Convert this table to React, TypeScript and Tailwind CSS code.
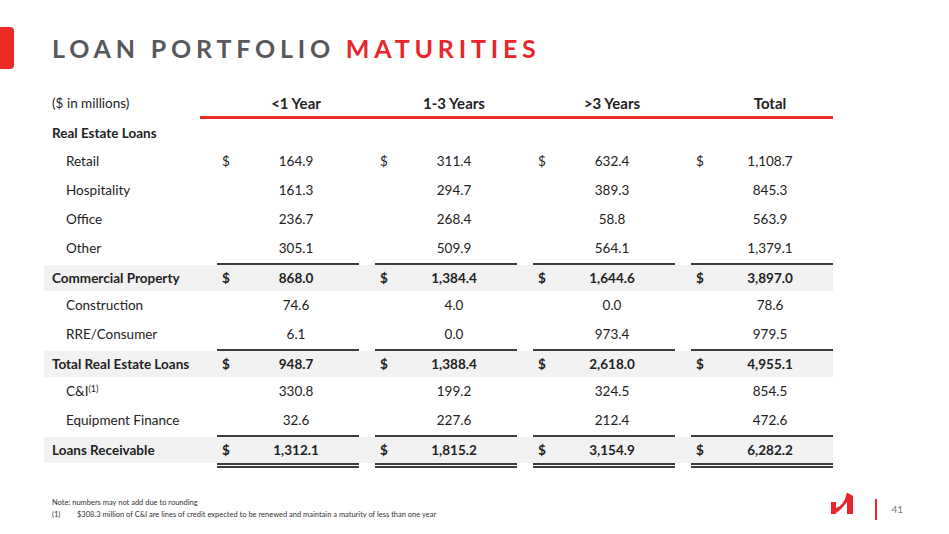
import type { ReactNode } from 'react'

type Row = {
  label: string
  kind: 'section' | 'item' | 'total' | 'grand'
  vals?: string[]
  dollar?: boolean
  sup?: string
}

const ROWS: Row[] = [
  { label: 'Real Estate Loans', kind: 'section' },
  { label: 'Retail', kind: 'item', vals: ['164.9', '311.4', '632.4', '1,108.7'], dollar: true },
  { label: 'Hospitality', kind: 'item', vals: ['161.3', '294.7', '389.3', '845.3'] },
  { label: 'Office', kind: 'item', vals: ['236.7', '268.4', '58.8', '563.9'] },
  { label: 'Other', kind: 'item', vals: ['305.1', '509.9', '564.1', '1,379.1'] },
  { label: 'Commercial Property', kind: 'total', vals: ['868.0', '1,384.4', '1,644.6', '3,897.0'] },
  { label: 'Construction', kind: 'item', vals: ['74.6', '4.0', '0.0', '78.6'] },
  { label: 'RRE/Consumer', kind: 'item', vals: ['6.1', '0.0', '973.4', '979.5'] },
  { label: 'Total Real Estate Loans', kind: 'total', vals: ['948.7', '1,388.4', '2,618.0', '4,955.1'] },
  { label: 'C&I', kind: 'item', sup: '(1)', vals: ['330.8', '199.2', '324.5', '854.5'] },
  { label: 'Equipment Finance', kind: 'item', vals: ['32.6', '227.6', '212.4', '472.6'] },
  { label: 'Loans Receivable', kind: 'grand', vals: ['1,312.1', '1,815.2', '3,154.9', '6,282.2'] },
]

const HEADERS = ['<1 Year', '1-3 Years', '>3 Years', 'Total']

// label column + four money columns, 16px apart
const GRID = 'grid grid-cols-[157px_142px_142px_142px_142px] gap-x-4'

function Cell({ value, dollar, bold }: { value: string; dollar?: boolean; bold?: boolean }) {
  return (
    <div className={`flex items-center ${bold ? 'font-bold' : ''}`}>
      <span className="w-[16px] pl-[5px]">{dollar ? '$' : ''}</span>
      <span className="flex-1 text-center">{value}</span>
    </div>
  )
}

function Rule({ kind }: { kind: 'single' | 'double' }) {
  const cls = kind === 'single' ? 'h-[2px] bg-[#3c3c3c]' : 'h-[5px] border-y-2 border-[#3c3c3c]'
  return (
    <div className={GRID}>
      <div />
      {HEADERS.map((h) => (
        <div key={h} className={cls} />
      ))}
    </div>
  )
}

function TableRow({ row }: { row: Row }) {
  if (row.kind === 'section') {
    return <div className="flex h-[28px] items-center pl-2 font-bold">{row.label}</div>
  }
  const strong = row.kind !== 'item'
  const body: ReactNode = (
    <div className={`${GRID} ${strong ? 'h-[26px] bg-[#f2f2f2]' : 'h-[29px]'} items-center`}>
      <div className={strong ? 'pl-2 font-bold' : 'pl-[22px]'}>
        {row.label}
        {row.sup && <sup className="text-[9px]">{row.sup}</sup>}
      </div>
      {row.vals!.map((v, i) => (
        <Cell key={i} value={v} dollar={strong || row.dollar} bold={strong} />
      ))}
    </div>
  )
  return (
    <>
      {strong && <Rule kind="single" />}
      {body}
      {row.kind === 'grand' && <Rule kind="double" />}
    </>
  )
}

function Logo() {
  return (
    <svg width="25" height="24" viewBox="0 0 25 24" className="fill-[#e8262b]">
      <rect x="1" y="11" width="5" height="12" />
      <path d="M17 1.5 L23 5 L23 23 L17 23 Z" />
      <path d="M6 17 Q14 15 17 1.5 L17 11 Q12 18 6 22 Z" />
    </svg>
  )
}

export default function App() {
  return (
    <div className="relative h-[534px] w-[949px] overflow-hidden bg-white text-[#222] [font-family:Lato,'Liberation_Sans',sans-serif]">
      <div className="mt-[27px] flex h-[42px] items-center">
        <div className="h-[42px] w-[14px] rounded-r-[4px] bg-[#ee2a24]" />
        <h1 className="ml-[38px] text-[25px] font-bold leading-none tracking-[4.8px] text-[#58585a]">
          LOAN PORTFOLIO <span className="text-[#e8262b]">MATURITIES</span>
        </h1>
      </div>

      <div className="ml-[44px] mt-[22px] w-[789px] text-[13.5px]">
        <div className={`${GRID} h-[25px] items-center`}>
          <div className="pl-2">($ in millions)</div>
          {HEADERS.map((h) => (
            <div key={h} className="flex">
              <span className="w-[16px]" />
              <span className="flex-1 text-center text-[15px] font-bold">{h}</span>
            </div>
          ))}
        </div>
        <div className="ml-[156px] h-[3px] bg-[#ee2a24]" />
        {ROWS.map((r) => (
          <TableRow key={r.label} row={r} />
        ))}
      </div>

      <div className="mt-[23px] flex items-start">
        <div className="ml-[52px] mt-[6px] flex-1 text-[7.5px] leading-[12px] text-[#333]">
          <div>Note: numbers may not add due to rounding</div>
          <div className="flex">
            <span className="w-[25px]">(1)</span>
            <span>$308.3 million of C&amp;I are lines of credit expected to be renewed and maintain a maturity of less than one year</span>
          </div>
        </div>
        <div className="mr-[46px] flex items-start">
          <Logo />
          <div className="ml-[20px] mt-[8px] h-[21px] w-[2px] bg-[#e8262b]" />
          <div className="ml-[14px] mt-[13px] text-[10px] leading-none text-[#7a7a7a]">41</div>
        </div>
      </div>
    </div>
  )
}
